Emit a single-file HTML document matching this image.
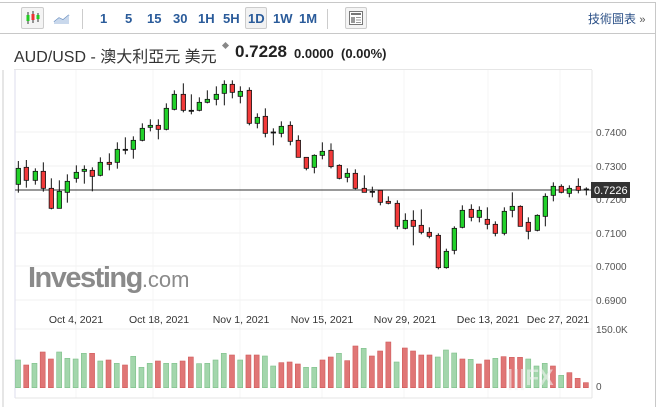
<!DOCTYPE html>
<html><head><meta charset="utf-8"><style>
*{margin:0;padding:0;box-sizing:border-box}
body{width:658px;height:407px;background:#fff;font-family:"Liberation Sans","Noto Sans CJK TC",sans-serif;position:relative;overflow:hidden}
.a{position:absolute}
.tb{font-size:13px;font-weight:bold;color:#2a5b9a}
</style></head><body>
<div class="a" style="left:0;top:2px;width:656px;height:405px;border:1px solid #c8c8c8;border-left:none;border-bottom:none"></div>
<div class="a" style="left:0;top:33px;width:656px;height:1px;background:#c8c8c8"></div>
<div class="a" style="left:21px;top:7px;width:23px;height:22px;border:1px solid #ccc;border-radius:2px;background:#f4f4f4"></div>
<svg class="a" style="left:24px;top:10px" width="18" height="16"><g stroke="#333" stroke-width="1"><line x1="4" y1="2" x2="4" y2="14"/><line x1="9" y1="1" x2="9" y2="13"/><line x1="14" y1="3" x2="14" y2="12"/></g><rect x="2.5" y="5" width="3" height="6" fill="#2c2"/><rect x="7.5" y="4" width="3" height="6" fill="#e33"/><rect x="12.5" y="5" width="3" height="4" fill="#2c2"/></svg>
<svg class="a" style="left:53px;top:11px" width="18" height="14"><path d="M1 11 L6 7 L10 9 L16 4" stroke="#6a8fc0" stroke-width="1.3" fill="none"/><path d="M1 11 L6 7 L10 9 L16 4 L16 13 L1 13Z" fill="#c9d8ec"/></svg>
<div class="a" style="left:82px;top:9px;width:1px;height:20px;background:#ccc"></div>
<div class="a tb" style="left:100px;top:11px">1</div>
<div class="a tb" style="left:125px;top:11px">5</div>
<div class="a tb" style="left:147px;top:11px">15</div>
<div class="a tb" style="left:173px;top:11px">30</div>
<div class="a tb" style="left:198px;top:11px">1H</div>
<div class="a tb" style="left:223px;top:11px">5H</div>
<div class="a" style="left:245px;top:7px;width:22px;height:22px;border:1px solid #ccc;border-radius:2px;background:#f2f2f2"></div>
<div class="a tb" style="left:248px;top:11px">1D</div>
<div class="a tb" style="left:273px;top:11px">1W</div>
<div class="a tb" style="left:299px;top:11px">1M</div>
<div class="a" style="left:327px;top:9px;width:1px;height:20px;background:#ccc"></div>
<div class="a" style="left:345px;top:7px;width:22px;height:22px;border:1px solid #ccc;border-radius:2px;background:#f4f4f4"></div>
<svg class="a" style="left:349px;top:11px" width="14" height="14"><rect x="0.5" y="0.5" width="13" height="13" fill="#fff" stroke="#777"/><rect x="2" y="2" width="10" height="2" fill="#777"/><rect x="2" y="6" width="4" height="6" fill="#999"/><rect x="7" y="6" width="5" height="1" fill="#999"/><rect x="7" y="8.5" width="5" height="1" fill="#999"/><rect x="7" y="11" width="5" height="1" fill="#999"/></svg>
<div class="a" style="left:588px;top:10px;font-size:12px;color:#2a4f86">技術圖表 <span style="color:#555;font-size:11px">»</span></div>
<div class="a" style="left:14px;top:43px;font-size:16px;color:#333">AUD/USD - 澳大利亞元 美元</div>
<div class="a" style="left:223px;top:43px;width:5px;height:5px;background:#888;transform:rotate(45deg)"></div>
<div class="a" style="left:235px;top:42px;font-size:17px;font-weight:bold;color:#222">0.7228</div>
<div class="a" style="left:294px;top:46px;font-size:13px;font-weight:bold;color:#222">0.0000 &nbsp;(0.00%)</div>
<div class="a" style="left:14px;top:69px;width:578px;height:1px;background:#e6e6e6"></div>
<svg id="c" class="a" style="left:0;top:0" width="658" height="407"></svg>
<div class="a" style="left:28px;top:262px;font-size:29px;font-weight:bold;color:#8a8a8a;letter-spacing:-1.5px">Investing<span style="font-weight:normal;font-size:22px;letter-spacing:0">.com</span></div>
<script>
var C=[[55,295,343,273,368,'g'],[79,292,331,270,353,'r'],[106,304,331,295,344,'g'],[130,304,355,277,365,'r'],[154,355,415,325,418,'r'],[178,364,415,331,415,'g'],[202,334,367,313,398,'g'],[229,307,325,286,338,'g'],[253,298,304,286,341,'g'],[277,301,319,292,364,'r'],[301,277,316,262,319,'g'],[328,277,283,250,301,'r'],[352,238,277,217,296,'g'],[376,238,241,202,253,'k'],[400,211,238,199,266,'g'],[427,175,211,160,214,'g'],[451,166,172,148,184,'g'],[475,166,178,148,208,'r'],[499,115,178,100,181,'g'],[523,73,118,61,121,'g'],[550,73,121,40,127,'r'],[574,121,124,73,133,'k'],[598,97,121,82,124,'g'],[622,88,97,61,100,'g'],[649,73,88,49,106,'g'],[673,43,70,31,106,'g'],[697,43,67,31,85,'r'],[721,64,79,49,100,'g'],[748,61,160,52,166,'r'],[772,142,160,130,175,'g'],[796,139,190,115,202,'r'],[820,186,188,175,226,'k'],[844,169,190,154,202,'g'],[871,166,214,154,226,'r'],[895,211,262,196,262,'r'],[919,262,295,262,301,'r'],[943,256,292,253,310,'g'],[967,244,256,217,268,'g']];
var D=[[3,241,290,220,295,'r'],[28,286,325,283,328,'r'],[52,310,322,295,337,'g'],[76,310,355,298,358,'r'],[103,355,367,316,367,'r'],[127,364,367,350,382,'k'],[151,361,397,361,406,'r'],[175,394,400,379,403,'r'],[202,400,469,391,478,'r'],[226,451,475,430,478,'g'],[250,451,469,421,526,'r'],[274,466,487,418,493,'r'],[298,487,499,472,505,'r'],[325,496,593,490,598,'r'],[349,544,593,536,596,'g'],[373,475,541,469,553,'g'],[397,421,472,406,475,'g'],[424,418,442,403,454,'r'],[448,421,442,409,457,'g'],[472,448,463,412,478,'r'],[496,463,490,454,499,'r'],[523,424,490,412,496,'g'],[547,409,421,367,442,'g'],[571,409,469,406,469,'r'],[595,457,484,442,508,'r'],[622,436,481,433,484,'g'],[646,379,439,370,469,'g'],[670,349,376,337,394,'g'],[694,349,367,343,370,'r'],[718,355,370,346,382,'g'],[745,349,361,325,370,'r'],[769,357,359,352,376,'k']];
var s='';
[132,166,199,233,266,300].forEach(function(y){s+='<line x1="15" y1="'+y+'" x2="592" y2="'+y+'" stroke="#f2f2f2"/>'});
[76,153,240,322,404,488,560].forEach(function(x){s+='<line x1="'+x+'" y1="70" x2="'+x+'" y2="398" stroke="#f4f4f4"/>'});
s+='<line x1="15" y1="329" x2="592" y2="329" stroke="#f0f0f0"/>';
s+='<line x1="15" y1="70" x2="15" y2="398" stroke="#dde"/><line x1="3" y1="70" x2="3" y2="407" stroke="#ccc"/>';
s+='<line x1="592" y1="70" x2="592" y2="398" stroke="#e4e4e4"/><line x1="15" y1="398" x2="592" y2="398" stroke="#e4e4e4"/>';
var V=[[300,'g'],[315,'r'],[310,'g'],[276,'r'],[297,'r'],[276,'g'],[295,'g'],[297,'g'],[280,'g'],[280,'r'],[303,'g'],[300,'r'],[310,'g'],[315,'r'],[289,'g'],[322,'g'],[310,'g'],[303,'r'],[310,'g'],[310,'g'],[303,'r'],[291,'r'],[311,'g'],[310,'g'],[300,'g'],[280,'g'],[285,'r'],[300,'g'],[285,'r'],[285,'r'],[288,'g'],[318,'g'],[308,'r'],[306,'r'],[312,'r'],[322,'g'],[322,'g'],[300,'r'],[291,'r'],[280,'g'],[302,'r'],[258,'r'],[265,'g'],[288,'r'],[273,'r'],[246,'r'],[306,'g'],[264,'r'],[273,'r'],[285,'r'],[285,'r'],[291,'g'],[270,'g'],[279,'g'],[297,'r'],[298,'g'],[312,'r'],[300,'r'],[295,'g'],[290,'r'],[292,'r'],[292,'r'],[297,'g'],[318,'g'],[310,'g'],[318,'r'],[346,'g'],[338,'r'],[355,'r'],[368,'r']];
V.forEach(function(v,i){var x=18+i*8.23,y=260+v[0]/3;s+='<rect x="'+(x-2.5)+'" y="'+y+'" width="5" height="'+(387.7-y)+'" fill="'+(v[1]=='g'?'#a3d6ac':'#e07676')+'" stroke="'+(v[1]=='g'?'#7cbf88':'#d05a5a')+'" stroke-width="0.6"/>'});
s+='<text x="507" y="385" font-size="22" font-weight="bold" fill="#f2f2f2" fill-opacity="0.6" font-family="Liberation Sans">|||FX</text>';
s+='<line x1="15" y1="190" x2="592" y2="190" stroke="#333" stroke-width="1"/>';
function cd(x,bt,bb,wt,wb,c){var col=c=='g'?'#22d12a':c=='r'?'#f23a3a':'#222';var h=Math.max(bb-bt,1);s+='<line x1="'+x+'" y1="'+wt+'" x2="'+x+'" y2="'+wb+'" stroke="#111"/>';s+='<rect x="'+(x-2.2)+'" y="'+bt+'" width="4.4" height="'+h+'" fill="'+col+'" stroke="#111" stroke-width="0.8"/>'}
C.forEach(function(c){cd(c[0]/3,70+c[1]/3,70+c[2]/3,70+c[3]/3,70+c[4]/3,c[5])});
D.forEach(function(c){cd(330+c[0]/3,70+c[1]/3,70+c[2]/3,70+c[3]/3,70+c[4]/3,c[5])});
var L=[['0.7400',132],['0.7300',166],['0.7200',199],['0.7100',233],['0.7000',266],['0.6900',300],['150.0K',329],['0',386]];
L.forEach(function(l){s+='<text x="596" y="'+(l[1]+4)+'" font-size="10" fill="#555" font-family="Liberation Sans">'+l[0]+'</text>'});
s+='<rect x="591" y="182" width="39" height="16" fill="#333"/><text x="594" y="194" font-size="11" fill="#fff" font-family="Liberation Sans">0.7226</text>';
[['Oct 4, 2021',76],['Oct 18, 2021',159],['Nov 1, 2021',241],['Nov 15, 2021',322],['Nov 29, 2021',405],['Dec 13, 2021',488],['Dec 27, 2021',558]].forEach(function(d){s+='<text x="'+d[1]+'" y="323" text-anchor="middle" font-size="10.5" fill="#333" font-family="Liberation Sans">'+d[0]+'</text>'});
document.getElementById('c').innerHTML=s;
</script>
</body></html>
